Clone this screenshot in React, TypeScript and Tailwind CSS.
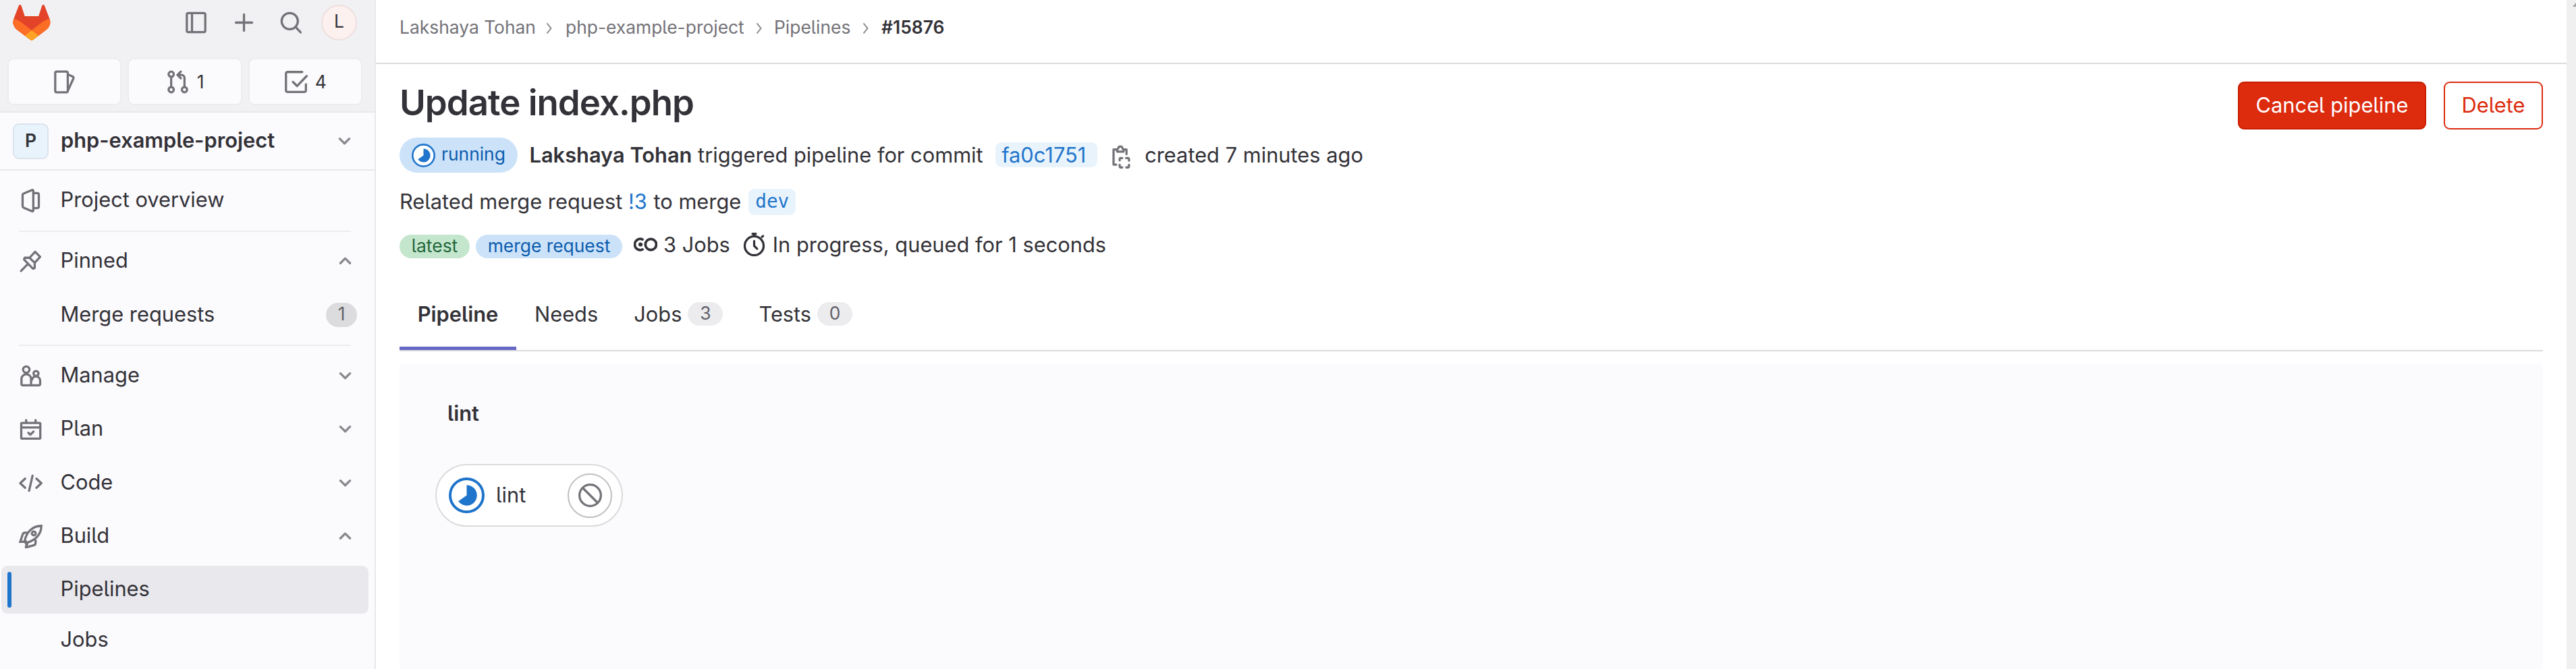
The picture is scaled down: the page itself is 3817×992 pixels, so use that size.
import type { ReactNode } from "react";

type IconProps = { children: ReactNode; className?: string };

function Icon({ children, className = "h-[35px] w-[35px] text-[#737278]" }: IconProps) {
  return (
    <svg
      viewBox="0 0 16 16"
      fill="none"
      stroke="currentColor"
      strokeWidth="1.5"
      strokeLinecap="round"
      strokeLinejoin="round"
      className={`block shrink-0 ${className}`}
    >
      {children}
    </svg>
  );
}

function Logo() {
  return (
    <svg viewBox="0 0 25 24" className="block h-[53px] w-[56px] shrink-0">
      <path
        d="m24.507 9.5-.034-.09L21.082.562a.896.896 0 0 0-1.694.091l-2.29 7.01H7.825L5.535.653a.898.898 0 0 0-1.694-.09L.451 9.411.416 9.5a6.297 6.297 0 0 0 2.09 7.278l.012.01.03.022 5.16 3.867 2.56 1.935 1.554 1.176a1.051 1.051 0 0 0 1.268 0l1.555-1.176 2.56-1.935 5.197-3.89.014-.01A6.297 6.297 0 0 0 24.507 9.5Z"
        fill="#E24329"
      />
      <path
        d="m24.507 9.5-.034-.09a11.44 11.44 0 0 0-4.56 2.051l-7.447 5.632 4.742 3.584 5.197-3.89.014-.01A6.297 6.297 0 0 0 24.507 9.5Z"
        fill="#FC6D26"
      />
      <path
        d="m7.707 20.677 2.56 1.935 1.555 1.176a1.051 1.051 0 0 0 1.268 0l1.555-1.176 2.56-1.935-4.743-3.584-4.755 3.584Z"
        fill="#FCA326"
      />
      <path
        d="M5.01 11.461a11.43 11.43 0 0 0-4.56-2.05L.416 9.5a6.297 6.297 0 0 0 2.09 7.278l.012.01.03.022 5.16 3.867 4.745-3.584-7.444-5.632Z"
        fill="#FC6D26"
      />
    </svg>
  );
}

function Chevron({ up = false, className = "mr-[17px]" }: { up?: boolean; className?: string }) {
  return (
    <Icon className={`h-[35px] w-[35px] text-[#89888d] ${className}`}>
      <path d={up ? "M4.75 9.25 8 6l3.25 3.25" : "M4.75 6.25 8 9.5l3.25-3.25"} />
    </Icon>
  );
}

function RunningGlyph({ className }: { className: string }) {
  return (
    <svg viewBox="0 0 24 24" className={`block shrink-0 ${className}`}>
      <circle cx="12" cy="12" r="11.1" fill="#fff" stroke="#1f75cb" strokeWidth="1.8" />
      <path d="M12 5.1a6.9 6.9 0 1 1-5.6 10.9L12 12Z" fill="#1f75cb" />
    </svg>
  );
}

type ItemProps = {
  label: string;
  icon?: ReactNode;
  trailing?: ReactNode;
  active?: boolean;
  className?: string;
};

function NavItem({ label, icon, trailing, active = false, className = "" }: ItemProps) {
  return (
    <div
      className={`ml-[2px] flex h-[71px] w-[544px] items-center rounded-[9px] ${active ? "bg-[#e9e8ec]" : ""} ${className}`}
    >
      <span className={`ml-[9px] h-[53px] w-[6px] rounded-full ${active ? "bg-[#1f75cb]" : ""}`} />
      <span className="ml-[11px] flex w-[61.5px] shrink-0">{icon}</span>
      <span className="grow pb-[3px] leading-[40px]">{label}</span>
      {trailing}
    </div>
  );
}

function CountCard({ icon, count }: { icon: ReactNode; count?: string }) {
  return (
    <div className="flex h-[70px] grow basis-0 items-center justify-center gap-[11px] rounded-[9px] border-2 border-[#ececef] bg-[#fbfafd]">
      {icon}
      {count && <span className="text-[26.4px] leading-[40px]">{count}</span>}
    </div>
  );
}

function Sidebar() {
  return (
    <aside className="flex h-full w-[557px] shrink-0 flex-col border-r-2 border-[#e8e8eb] bg-[#fbfafd]">
      <div className="h-[167px] border-b-2 border-[#e8e8eb] bg-[#f1f1f4]">
        <div className="flex items-center pt-[7px] pl-[19px]">
          <Logo />
          <Icon className="ml-[198px] h-[35px] w-[35px] text-[#737278]">
            <rect x="1.75" y="1.5" width="12.5" height="13" rx="1" />
            <path d="M5.25 1.75v12.5" />
          </Icon>
          <Icon className="ml-[36px] h-[35px] w-[35px] text-[#737278]">
            <path d="M8 2.5v11M2.5 8h11" />
          </Icon>
          <Icon className="ml-[35px] h-[35px] w-[35px] text-[#737278]">
            <circle cx="7" cy="7" r="5.5" />
            <path d="m11 11 3.35 3.6" />
          </Icon>
          <span className="ml-[27px] flex h-[53px] w-[53px] items-center justify-center rounded-full border-2 border-[#eedfdf] bg-[#fcf1ef] pb-[4px] text-[26.4px] leading-none">
            L
          </span>
        </div>
        <div className="mt-[26px] flex gap-[9px] pr-[18px] pl-[11px]">
          <CountCard
            icon={
              <Icon>
                <rect x="1.75" y="1" width="8.5" height="14" rx="1" />
                <path d="m10.5 3 3 1.3a1 1 0 0 1 .6 1.3L10.5 13.5" />
              </Icon>
            }
          />
          <CountCard
            count="1"
            icon={
              <Icon>
                <circle cx="3.5" cy="2.75" r="1.75" />
                <circle cx="3.5" cy="13.25" r="1.75" />
                <circle cx="12.5" cy="13.25" r="1.75" />
                <path d="M3.5 4.5v7M12.5 11.5V5.25a2 2 0 0 0-2-2H8.5M10 1 7.75 3.25 10 5.5" />
              </Icon>
            }
          />
          <CountCard
            count="4"
            icon={
              <Icon>
                <path d="M12.25 1.25H2.25a1 1 0 0 0-1 1v11.5a1 1 0 0 0 1 1h11.5a1 1 0 0 0 1-1V9.5M6 8l2.75 2.75L15.25 4" />
              </Icon>
            }
          />
        </div>
      </div>
      <div className="flex h-[86px] shrink-0 items-center border-b-2 border-[#e8e8eb] pl-[19px]">
        <span className="flex h-[53px] w-[53px] items-center justify-center rounded-[9px] border-2 border-[#dbe4ee] bg-[#e9f3fc] pb-[2px] text-[26.4px] leading-none font-semibold">
          P
        </span>
        <span className="ml-[18px] grow pb-[3px] leading-[40px] font-semibold">php-example-project</span>
        <Chevron className="mr-[27px]" />
      </div>
      <NavItem
        className="mt-[8.5px]"
        label="Project overview"
        icon={
          <Icon>
            <path d="M2.5 4.2a1 1 0 0 1 .7-.95L8.9.8a.6.6 0 0 1 .85.6v13.2a.6.6 0 0 1-.85.6l-5.7-2.45a1 1 0 0 1-.7-.95ZM10 2.95h2.5a1 1 0 0 1 1 1v8.1a1 1 0 0 1-1 1H10" />
          </Icon>
        }
      />
      <div className="mt-[9.5px] ml-[28px] h-[2px] w-[492px] shrink-0 bg-[#ececef]" />
      <NavItem
        className="mt-[7.5px]"
        label="Pinned"
        icon={
          <Icon>
            <path d="m1.5 14.5 4.6-4.7M11 1.5 14.4 5 10.7 9v3.6l-1.2.4L3.5 6.8l.4-1.2h3.3ZM7.2 5.6l3.5 3.4" />
          </Icon>
        }
        trailing={<Chevron up />}
      />
      <NavItem
        className="mt-[9px]"
        label="Merge requests"
        trailing={
          <span className="mr-[17px] flex h-[36px] w-[46px] items-center justify-center rounded-full bg-[#dcdcde] pb-[3px] text-[26.4px] leading-none text-[#626168]">
            1
          </span>
        }
      />
      <div className="mt-[8.5px] ml-[28px] h-[2px] w-[492px] shrink-0 bg-[#ececef]" />
      <NavItem
        className="mt-[8.5px]"
        label="Manage"
        trailing={<Chevron />}
        icon={
          <Icon>
            <circle cx="5" cy="3.7" r="2.15" />
            <path d="M1.75 10a3.25 3.25 0 0 1 6.5 0v3.35a1 1 0 0 1-1 1h-4.5a1 1 0 0 1-1-1ZM8.8 10.8a2.8 2.8 0 0 1 5.6.6v1.95a1 1 0 0 1-1 1H7.5" />
            <circle cx="11.6" cy="6.3" r="1.7" />
          </Icon>
        }
      />
      <NavItem
        className="mt-[8.5px]"
        label="Plan"
        trailing={<Chevron />}
        icon={
          <Icon>
            <rect x="1.6" y="3.75" width="12.9" height="10.6" rx=".5" />
            <path d="M1.6 6.8h12.9M4.9 1.75v1.8M11.3 1.75v1.8M6.4 10.4l1.3 1.3 2.2-2.1" />
          </Icon>
        }
      />
      <NavItem
        className="mt-[8.5px]"
        label="Code"
        trailing={<Chevron />}
        icon={
          <Icon>
            <path d="M4.2 4.9 .9 8l3.3 3.1M11.9 4.9 15.2 8l-3.3 3.1M9.25 2.9 6.9 13.1" />
          </Icon>
        }
      />
      <NavItem
        className="mt-[8px]"
        label="Build"
        trailing={<Chevron up />}
        icon={
          <Icon>
            <path
              strokeLinejoin="miter"
              d="M4 10.6C5 6 8.5.8 15.2.8c0 6.6-5 9.8-9.6 11.5ZM6 5.4H4.2A1.8 1.8 0 0 0 2.5 6.7L.9 11.6h3L5.6 13.4M11.3 10v2.3a1.8 1.8 0 0 1-1.3 1.7l-5.2 1.4.4-3"
            />
            <circle cx="10.1" cy="5.9" r="1.3" />
          </Icon>
        }
      />
      <NavItem className="mt-[8.5px]" label="Pipelines" active />
      <NavItem className="mt-[4px]" label="Jobs" />
    </aside>
  );
}

function Sep() {
  return (
    <svg viewBox="0 0 9 18" className="mt-[3px] block h-[18px] w-[9px]" fill="none" stroke="#89888d" strokeWidth="2">
      <path d="M1.5 1.5 7.5 9l-6 7.5" />
    </svg>
  );
}

function TabBadge({ children }: { children: ReactNode }) {
  return (
    <span className="ml-[9px] flex h-[35px] w-[52px] items-center justify-center rounded-full bg-[#ececef] pb-[2px] text-[26.4px] leading-none text-[#626168]">
      {children}
    </span>
  );
}

function PipelineHeader() {
  return (
    <div className="flex h-[301px] justify-between pt-[26px]">
      <div className="flex flex-col leading-[40px] whitespace-pre">
        <h1 className="h-[60px] pt-[1px] text-[52.8px] leading-[60px] font-semibold tracking-[-1px]">
          Update index.php
        </h1>
        <div className="mt-[23px] flex h-[52px] items-center">
          <span className="flex h-[52px] w-[175px] items-center rounded-full bg-[#cbe2f9] pl-[18px] text-[#0b5cad]">
            <RunningGlyph className="h-[35px] w-[35px]" />
            <span className="ml-[9px] pb-[4px] text-[26.4px]">running</span>
          </span>
          <b className="ml-[17.5px] font-semibold">Lakshaya Tohan</b>
          <span> triggered pipeline for commit</span>
          <span className="mb-[1px] ml-[18.5px] flex h-[37px] w-[151px] items-center rounded-[9px] bg-[#e9f3fc] pl-[9px] text-[#1f75cb]">
            fa0c1751
          </span>
          <Icon className="mt-[5px] ml-[18px] h-[35px] w-[35px] text-[#737278]">
            <path d="M4.6 13.3H2.75V3H5.2M9.6 3h1.9v3.2M5.2 3v1.5h4.3V3M5.9 2.4a1.45 1.45 0 0 1 2.9 0" />
            <path d="M6.9 10.4V9.7a.8.8 0 0 1 .8-.8h.9M11.3 8.9h1.1a.8.8 0 0 1 .8.8v.9M13.2 13.4v1a.8.8 0 0 1-.8.8h-1M8.6 15.2h-.9a.8.8 0 0 1-.8-.8v-1" />
          </Icon>
          <span className="ml-[17px]">created 7 minutes ago</span>
        </div>
        <div className="mt-[22px] flex h-[42px] items-center">
          <span>Related merge request </span>
          <span className="text-[#1f75cb]">!3</span>
          <span className="ml-[1px]"> to merge</span>
          <span className="ml-[11px] flex h-[39px] w-[70px] items-center justify-center rounded-[9px] bg-[#e9f3fc] font-['DejaVu_Sans_Mono',monospace] text-[27.7px] text-[#1f75cb]">
            dev
          </span>
        </div>
        <div className="mt-[22px] flex h-[44px] items-center">
          <span className="mt-[3px] flex h-[35px] w-[104px] items-center justify-center rounded-full bg-[#c3e6cd] pb-[3px] text-[26.4px] leading-none text-[#24663b]">
            latest
          </span>
          <span className="mt-[3px] ml-[9px] flex h-[35px] w-[217px] items-center justify-center rounded-full bg-[#cbe2f9] pb-[3px] text-[26.4px] leading-none text-[#0b5cad]">
            merge request
          </span>
          <Icon className="mb-[4px] ml-[17px] h-[35px] w-[35px] text-[#333238]">
            <circle cx="11.6" cy="8" r="3.7" strokeWidth="1.7" />
            <path d="M6 4.6a3.75 3.75 0 1 0 0 6.8" strokeWidth="1.7" />
            <circle cx="4.6" cy="8" r="1.4" fill="currentColor" stroke="none" />
          </Icon>
          <span className="ml-[9px] pb-[3px]">3 Jobs</span>
          <Icon className="mb-[3px] ml-[18px] h-[35px] w-[35px] text-[#333238]">
            <circle cx="8" cy="8.9" r="6.4" />
            <path d="M8 5.7v3.2l2 2M6.9.8h2.2M8 1v1.5M13.3 2.9l.7-.6" />
          </Icon>
          <span className="ml-[10px] pb-[3px]">In progress, queued for 1 seconds</span>
        </div>
      </div>
      <div className="flex gap-[26px] leading-[40px]">
        <button className="flex h-[71px] w-[279px] items-center justify-center rounded-[9px] border-2 border-[#c91c00] bg-[#dd2b0e] pb-[2px] text-white">
          Cancel pipeline
        </button>
        <button className="flex h-[71px] w-[147px] items-center justify-center rounded-[9px] border-2 border-[#dd2b0e] bg-white pb-[2px] text-[#dd2b0e]">
          Delete
        </button>
      </div>
    </div>
  );
}

function PipelineGraph() {
  return (
    <section className="mt-[18px] grow bg-[#fbfafd] pt-[54px] pl-[53px]">
      <h2 className="pl-[18px] leading-[40px] font-semibold">lint</h2>
      <div className="mt-[55px] flex h-[93px] w-[278px] items-center rounded-full border-2 border-[#dcdcde] bg-white pl-[18px]">
        <RunningGlyph className="h-[53px] w-[53px]" />
        <span className="ml-[17px] w-[106px] pb-[1px] leading-[40px]">lint</span>
        <span className="flex h-[66px] w-[66px] items-center justify-center rounded-full border-2 border-[#bfbfc3]">
          <Icon className="h-[35px] w-[35px] text-[#737278]">
            <circle cx="8" cy="8" r="7.25" />
            <path d="m3.2 3.2 9.6 9.6" />
          </Icon>
        </span>
      </div>
    </section>
  );
}

export default function App() {
  return (
    <div className="flex h-[992px] w-[3817px] overflow-hidden bg-white font-['Inter','Liberation_Sans',sans-serif] text-[30.8px] text-[#333238] [font-feature-settings:'cv05']">
      <Sidebar />
      <main className="flex grow flex-col">
        <nav className="flex h-[95px] items-center border-b-2 border-[#dcdcde] pb-[13px] pl-[35px] text-[26.4px] leading-[40px] text-[#737278]">
          <span className="w-[217px]">Lakshaya Tohan</span>
          <Sep />
          <span className="ml-[20px] w-[282px]">php-example-project</span>
          <Sep />
          <span className="ml-[18px] w-[131px]">Pipelines</span>
          <Sep />
          <span className="ml-[19px] font-semibold text-[#333238]">#15876</span>
        </nav>
        <div className="flex grow flex-col pr-[35px] pl-[35px]">
          <PipelineHeader />
          <div className="flex h-[125px] items-stretch border-b-2 border-[#dcdcde] leading-[40px]">
            <div className="flex w-[173px] items-center justify-center border-b-[5px] border-[#6666c4] pt-[21px] font-semibold">
              Pipeline
            </div>
            <div className="ml-[27px] flex items-center pt-[16px]">Needs</div>
            <div className="ml-[53px] flex items-center pt-[16px]">
              Jobs
              <TabBadge>3</TabBadge>
            </div>
            <div className="ml-[53px] flex items-center pt-[16px]">
              Tests
              <TabBadge>0</TabBadge>
            </div>
          </div>
          <PipelineGraph />
        </div>
      </main>
      <div className="flex w-[14px] shrink-0 justify-end overflow-hidden bg-[#f0f0f0]">
        <svg viewBox="0 0 5 6" className="mt-[4px] h-[6px] w-[5px]">
          <path d="M5 0v6H0Z" fill="#a0a0a0" />
        </svg>
      </div>
    </div>
  );
}
